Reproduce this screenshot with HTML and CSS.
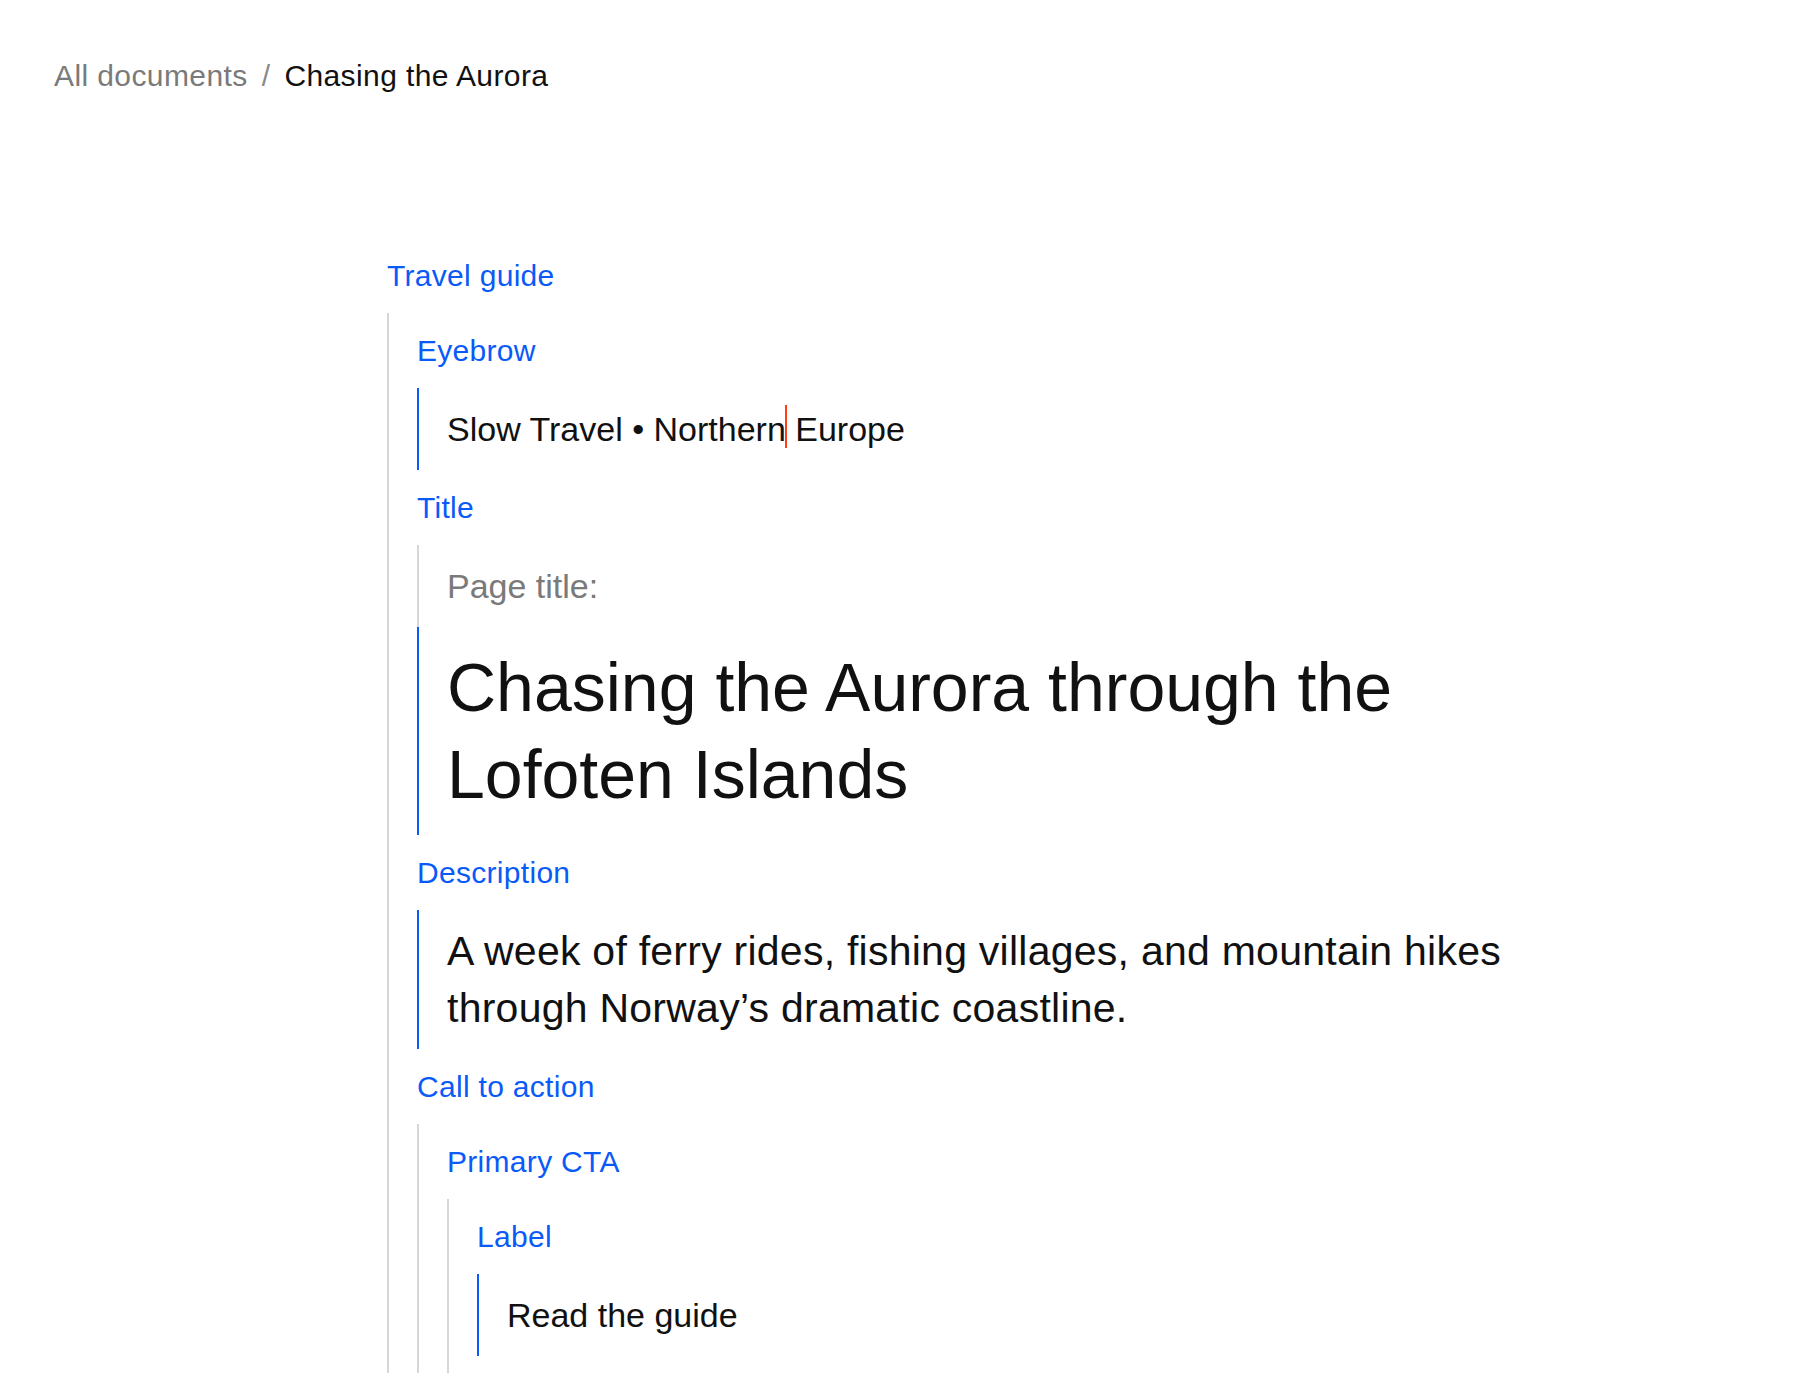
FILE: index.html
```html
<!DOCTYPE html>
<html lang="en">
<head>
<meta charset="utf-8">
<title>Chasing the Aurora</title>
<link rel="stylesheet" href="styles.css">
</head>
<body>
  <nav class="crumbs">
    <span class="crumb-link">All documents</span>
    <span class="crumb-sep">/</span>
    <span class="crumb-current">Chasing the Aurora</span>
  </nav>

  <main class="doc">
    <div class="label">Travel guide</div>
    <div class="group">
      <div class="label">Eyebrow</div>
      <div class="value text-md">Slow Travel • Northern<span class="caret"></span> Europe</div>

      <div class="label">Title</div>
      <div class="prefix text-md">Page title:</div>
      <div class="value text-xl">Chasing the Aurora through the Lofoten Islands</div>

      <div class="label">Description</div>
      <div class="value text-lg">A week of ferry rides, fishing villages, and mountain hikes through Norway’s dramatic coastline.</div>

      <div class="label">Call to action</div>
      <div class="group">
        <div class="label">Primary CTA</div>
        <div class="group">
          <div class="label">Label</div>
          <div class="value text-md">Read the guide</div>
        </div>
      </div>
    </div>
  </main>
</body>
</html>
```

FILE: styles.css
```css
* {
  box-sizing: border-box;
}

html, body {
  margin: 0;
  padding: 0;
  background: #ffffff;
}

body {
  font-family: "Liberation Sans", Arial, sans-serif;
  color: #111111;
}

.crumbs {
  display: flex;
  align-items: center;
  gap: 14px;
  padding: 56px 0 0 54px;
  font-size: 30px;
  letter-spacing: 0.4px;
  line-height: 40px;
}

.crumb-link {
  color: #7a7a7a;
}

.crumb-sep {
  color: #8a8a8a;
}

.crumb-current {
  color: #111111;
}

.doc {
  margin: 142px 0 0 387px;
  width: 1200px;
}

.label {
  color: #0a5af8;
  font-size: 30px;
  letter-spacing: 0.3px;
  line-height: 39px;
  padding: 18px 0;
}

.group {
  border-left: 2px solid #d6d6d6;
  padding-left: 28px;
  padding-bottom: 24px;
}

.value {
  border-left: 2px solid #0a5af8;
  padding: 17px 0 17px 28px;
  color: #111111;
}

.prefix {
  border-left: 2px solid #d6d6d6;
  padding: 17px 0 17px 28px;
  color: #7a7a7a;
}

.text-md {
  font-size: 34px;
  line-height: 48px;
}

.text-lg {
  font-size: 41px;
  letter-spacing: 0.25px;
  line-height: 57px;
  padding-top: 13px;
  padding-bottom: 12px;
}

.text-xl {
  font-size: 68px;
  line-height: 87px;
}

.caret {
  display: inline-block;
  width: 2px;
  height: 43px;
  margin: 0 -1px;
  vertical-align: top;
  background: #ff3d14;
}
```
